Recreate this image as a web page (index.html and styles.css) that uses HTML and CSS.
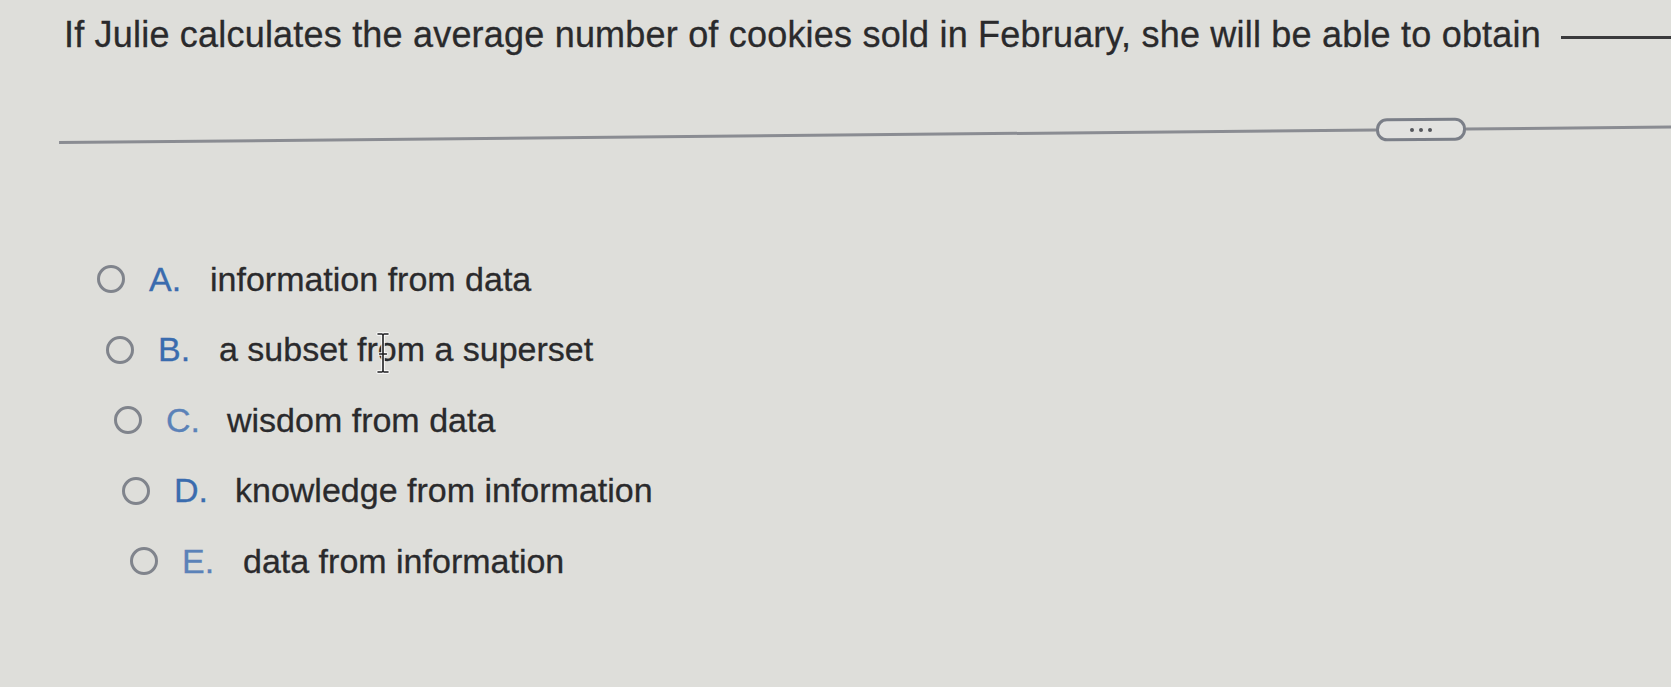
FILE: index.html
```html
<!DOCTYPE html>
<html lang="en">
<head>
<meta charset="utf-8">
<title>Question</title>
<link rel="stylesheet" href="styles.css">
</head>
<body>
<main class="page">
  <p class="question">If Julie calculates the average number of cookies sold in February, she will be able to obtain <span class="blank"></span></p>
  <div class="divider">
    <span class="rule rule-left"></span>
    <button class="more" type="button" aria-label="More">
      <span class="dot"></span><span class="dot"></span><span class="dot"></span>
    </button>
    <span class="rule rule-right"></span>
  </div>
  <ul class="options">
    <li class="option"><span class="radio"></span><span class="letter">A.</span><span class="text">information from data</span></li>
    <li class="option"><span class="radio"></span><span class="letter">B.</span><span class="text">a subset fr<span class="cursor-host">o<svg class="ibeam" width="14" height="42" viewBox="0 0 14 42" aria-hidden="true"><path d="M2 2 H6 Q7 2 7 4 V38 Q7 40 6 40 H2 M12 2 H8 Q7 2 7 4 M7 38 Q7 40 8 40 H12 M3.5 22 H10.5" fill="none" stroke="#ffffff" stroke-width="3.5" stroke-linecap="round"/><path d="M2 2 H6 Q7 2 7 4 V38 Q7 40 6 40 H2 M12 2 H8 Q7 2 7 4 M7 38 Q7 40 8 40 H12 M3.5 22 H10.5" fill="none" stroke="#1e1e20" stroke-width="1.6" stroke-linecap="round"/></svg></span>m a superset</span></li>
    <li class="option"><span class="radio"></span><span class="letter letter-faint">C.</span><span class="text">wisdom from data</span></li>
    <li class="option"><span class="radio"></span><span class="letter">D.</span><span class="text">knowledge from information</span></li>
    <li class="option"><span class="radio"></span><span class="letter letter-faint">E.</span><span class="text">data from information</span></li>
  </ul>
</main>
</body>
</html>
```

FILE: styles.css
```css
html, body {
  margin: 0;
  padding: 0;
}

body {
  background: #dededa;
  font-family: "Liberation Sans", Arial, sans-serif;
  color: #2a2a2c;
  width: 1671px;
  height: 687px;
  overflow: hidden;
}

.page {
  padding-top: 14px;
}

.question {
  margin: 0 0 0 64px;
  font-size: 36px;
  line-height: 42px;
  white-space: nowrap;
  letter-spacing: 0.2px;
  -webkit-text-stroke: 0.3px #2a2a2c;
}

.blank {
  display: inline-block;
  width: 130px;
  margin-left: 10px;
  border-bottom: 3px solid #3a3a3c;
  vertical-align: 8px;
}

.divider {
  display: flex;
  align-items: center;
  margin-top: 62px;
  margin-left: 59px;
  transform: rotate(-0.55deg);
  transform-origin: 1362px 50%;
}

.rule {
  height: 3px;
  background: #8a8c92;
}

.rule-left {
  flex: 1 1 auto;
}

.rule-right {
  width: 205px;
}

.more {
  width: 90px;
  height: 23px;
  box-sizing: border-box;
  border: 3px solid #7b7f88;
  border-radius: 11px;
  background: #e2e2e0;
  display: flex;
  align-items: center;
  justify-content: center;
  gap: 5px;
  padding: 0;
}

.dot {
  width: 4px;
  height: 4px;
  border-radius: 50%;
  background: #55575c;
}

.options {
  list-style: none;
  margin: 103px 0 0 0;
  padding: 0;
}

.option {
  display: flex;
  align-items: center;
  height: 70.5px;
  font-size: 34px;
  margin-left: 97px;
}

.option:nth-child(2) { margin-left: 106px; }
.option:nth-child(3) { margin-left: 114px; }
.option:nth-child(4) { margin-left: 122px; }
.option:nth-child(5) { margin-left: 130px; }

.radio {
  width: 28px;
  height: 28px;
  box-sizing: border-box;
  border: 3px solid #80848c;
  border-radius: 50%;
  flex: 0 0 auto;
}

.letter {
  color: #3a6cae;
  margin-left: 24px;
  width: 61px;
  flex: 0 0 auto;
  -webkit-text-stroke: 0.3px #3a6cae;
}

.letter-faint {
  color: #5b82b8;
  -webkit-text-stroke: 0.3px #5b82b8;
}

.text {
  color: #2a2a2c;
  white-space: nowrap;
  -webkit-text-stroke: 0.3px #2a2a2c;
}

.cursor-host {
  position: relative;
}

.ibeam {
  position: absolute;
  left: -2px;
  top: 2px;
}
```
